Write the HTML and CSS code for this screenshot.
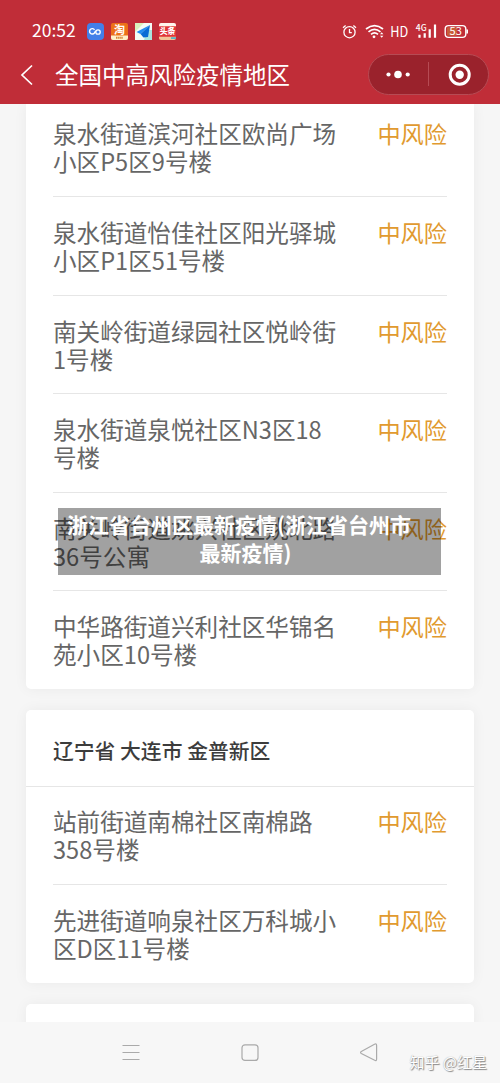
FILE: index.html
```html
<!DOCTYPE html>
<html lang="zh-CN">
<head>
<meta charset="utf-8">
<title>全国中高风险疫情地区</title>
<link rel="stylesheet" href="styles.css">
</head>
<body>
<div class="screen">
  <header class="top">
    <div class="status">
      <span class="clock">20:52</span>
      <svg class="app" viewBox="0 0 17 17"><rect width="17" height="17" rx="4" fill="#437fe8"/><path d="M7.5 6.8A2.7 2.7 0 1 0 7.4 10L8.7 8" fill="none" stroke="#fff" stroke-width="1.4"/><circle cx="11" cy="9" r="2.2" fill="none" stroke="#fff" stroke-width="1.3"/></svg>
      <svg class="app" viewBox="0 0 17 17"><rect width="17" height="17" rx="2" fill="#ed7019"/><path d="M0 12.5h17V15a2 2 0 0 1-2 2H2a2 2 0 0 1-2-2z" fill="#fff0c9"/><text x="8.5" y="11" class="tao">淘</text><path d="M5 14.8h7" stroke="#d78335" stroke-width="2" stroke-dasharray="1.5 .6"/></svg>
      <svg class="app" viewBox="0 0 17 17"><rect width="17" height="17" fill="#f4fbf5"/><path d="M0 0h9L0 9z" fill="#d9f1bd"/><path d="M12 7h5v10H9z" fill="#a9e5de"/><path d="M15 2L1.5 9l4 2z" fill="#218bf2"/><path d="M15 2L5.5 11l3 3.5L13 14z" fill="#096bd5"/></svg>
      <svg class="app" viewBox="0 0 17 17"><rect width="17" height="17" rx="2" fill="#e13437"/><path d="M2 0h13a2 2 0 0 1 2 2v1.3H0V2a2 2 0 0 1 2-2z" fill="#fff5ee"/><text x="8.5" y="11.4" class="tou">头条</text><path d="M0 13.8h17V15a2 2 0 0 1-2 2H2a2 2 0 0 1-2-2z" fill="#f2c598"/><path d="M12 14.2h5V16h-5z" fill="#56b7c7"/></svg>
      <svg class="signals" viewBox="0 0 130 20" fill="none" stroke="#fff">
        <circle cx="9.5" cy="11.2" r="5.6" stroke-width="1.3"/><path d="M9.5 8v3.6h2.3M3 6.7l2.6-2.2M16 6.7l-2.6-2.2" stroke-width="1.3"/>
        <path d="M26 8Q34.5 1.2 43 8M28.5 10.8Q34.5 5.8 40.5 10.8M31 13.4Q34.5 10.4 38 13.4" stroke-width="1.7"/><circle cx="34" cy="15.8" r="1.4" fill="#fff" stroke="none"/><path d="M40 13.2l1.7-2 1.7 2zM40 14.7l1.7 2 1.7-2z" fill="#fff" stroke="none"/>
        <text x="50.3" y="16" class="hd" textLength="18" lengthAdjust="spacingAndGlyphs">HD</text><text x="75.8" y="10" class="net">4G</text>
        <path d="M79.5 16.8v-3M84.7 16.8v-4.5M89.7 16.8V8.3M95 16.8V3.5" stroke-width="2.2"/>
        <rect x="105.2" y="4.6" width="20.6" height="11.8" rx="3.4" stroke-width="1.4"/><rect x="107" y="6.3" width="10" height="8.4" rx="1" fill="#c85c38" stroke="none"/><path d="M127.2 8.5v4" stroke-width="1.6"/><text x="115.7" y="14.4" class="pct">53</text>
      </svg>
    </div>
    <div class="bar">
      <svg class="back" viewBox="0 0 14 22"><path d="M12 1.5L2 11l10 9.5" fill="none" stroke="#fff" stroke-width="1.7"/></svg>
      <h1 class="title">全国中高风险疫情地区</h1>
      <svg class="capsule" viewBox="0 0 121 41"><rect x=".5" y=".5" width="120" height="40" rx="20" fill="#9a222c" stroke="#b64b54"/><g fill="#fff"><circle cx="20.5" cy="20.5" r="2.1"/><circle cx="30" cy="20.5" r="3.8"/><circle cx="39.7" cy="20.5" r="2.1"/><circle cx="91.7" cy="20.7" r="4.2"/></g><path d="M60.5 8v24" stroke="#b64b54"/><circle cx="91.7" cy="20.7" r="9.5" fill="none" stroke="#fff" stroke-width="3"/></svg>
    </div>
  </header>
  <main class="list">
    <section class="card first">
      <div class="row"><p class="place">泉水街道滨河社区欧尚广场<br>小区P5区9号楼</p><span class="risk">中风险</span></div>
      <div class="row"><p class="place">泉水街道怡佳社区阳光驿城<br>小区P1区51号楼</p><span class="risk">中风险</span></div>
      <div class="row"><p class="place">南关岭街道绿园社区悦岭街<br>1号楼</p><span class="risk">中风险</span></div>
      <div class="row"><p class="place">泉水街道泉悦社区N3区18<br>号楼</p><span class="risk">中风险</span></div>
      <div class="row"><p class="place">南关岭街道姚兴社区姚北路<br>36号公寓</p><span class="risk">中风险</span></div>
      <div class="row"><p class="place">中华路街道兴利社区华锦名<br>苑小区10号楼</p><span class="risk">中风险</span></div>
    </section>
    <section class="card">
      <h2 class="region">辽宁省 大连市 金普新区</h2>
      <div class="row"><p class="place">站前街道南棉社区南棉路<br>358号楼</p><span class="risk">中风险</span></div>
      <div class="row"><p class="place">先进街道响泉社区万科城小<br>区D区11号楼</p><span class="risk">中风险</span></div>
    </section>
    <section class="card next"></section>
  </main>
  <nav class="nav">
    <svg class="key" viewBox="0 0 20 20"><path d="M1.5 3.5h17M1.5 10.5h17M1.5 17.5h17"/></svg>
    <svg class="key" viewBox="0 0 20 20"><rect x="2" y="2.8" width="16" height="15.6" rx="3"/></svg>
    <svg class="key" viewBox="0 0 20 20"><path d="M2.3 9.5L15.5 2.2Q17.6 1.3 17.6 3.4V17Q17.6 19.2 15.7 18.3L2.3 11.5Q.8 10.5 2.3 9.5z"/></svg>
  </nav>
  <div class="caption"><span class="lead">浙江省台州区最新疫情(浙江省台州市</span><br>最新疫情)</div>
  <div class="watermark">知乎 @红星</div>
</div>
</body>
</html>
```
FILE: styles.css
```css
* { box-sizing: border-box; }
body { margin: 0; font-family: "Noto Sans CJK SC", sans-serif; }
.screen { position: relative; width: 500px; height: 1083px; overflow: hidden; display: flex; flex-direction: column; background: #f6f6f6; }
.top { flex: none; height: 104px; background: #c02d38; color: #fff; }
.status { display: flex; align-items: center; gap: 7px; height: 54px; padding: 8px 30px 0 32px; }
.clock { width: 48px; padding-bottom: 2px; font-size: 17.5px; line-height: 20px; white-space: nowrap; }
.app { width: 17px; height: 17px; flex: none; }
.signals { width: 130px; height: 20px; margin-left: auto; flex: none; }
.signals text { fill: #fff; stroke: none; }
.tao { font-size: 11px; font-weight: 700; fill: #fff; text-anchor: middle; }
.tou { font-size: 7.8px; font-weight: 900; fill: #fff; text-anchor: middle; }
.hd { font-size: 14.5px; }
.net { font-size: 8.5px; font-weight: 500; }
.pct { font-size: 11px; text-anchor: middle; }
.bar { display: flex; align-items: center; height: 41px; padding: 0 11px 0 20px; }
.back { width: 14px; height: 22px; }
.title { margin: 0 0 0 21px; padding-bottom: 1px; font-size: 23.5px; line-height: 36px; font-weight: 400; }
.capsule { width: 121px; height: 41px; margin-left: auto; }
.list { flex: none; height: 918px; overflow: hidden; padding: 0 26px; display: flex; flex-direction: column; gap: 21px; }
.card { flex: none; background: #fff; border-radius: 5px; box-shadow: 0 0 14px rgba(0, 0, 0, .05); }
.first { height: 584.5px; border-radius: 0 0 5px 5px; }
.first .row:first-child { height: 93px; padding-top: 15px; }
.row { display: flex; justify-content: space-between; height: 98.5px; margin: 0 27px; padding-top: 21px; border-bottom: 1px solid #e6e6e6; }
.row:last-child { border-bottom: 0; }
.place { margin: 0; font-size: 23.6px; line-height: 28px; color: #666; white-space: nowrap; }
.risk { font-size: 23.2px; line-height: 28px; color: #e19a2f; white-space: nowrap; }
.region { height: 77px; margin: 0; padding: 2px 27px 0; font-size: 20.8px; line-height: 76px; font-weight: 500; color: #3c3c3c; border-bottom: 1px solid #e6e6e6; }
.card .region + .row { height: 98px; padding-top: 20.5px; }
.next { height: 60px; }
.nav { flex: 1; display: flex; justify-content: center; gap: 99px; padding-top: 20px; background: #f7f7f7; }
.key { width: 20px; height: 20px; fill: none; stroke: #aaa; stroke-width: 1.2; }
.caption { position: absolute; left: 58px; top: 508px; width: 383px; height: 67px; padding: 2px 8px 0 0; background: rgba(0, 0, 0, .37); color: #fff; font-size: 21px; line-height: 28px; font-weight: 700; text-align: center; white-space: nowrap; }
.lead { padding-right: 13px; }
.watermark { position: absolute; right: 13px; bottom: 10px; font-size: 15px; line-height: 22px; color: #fff; text-shadow: 1px 1px 1px #888, 0 0 1px #999; }
```
